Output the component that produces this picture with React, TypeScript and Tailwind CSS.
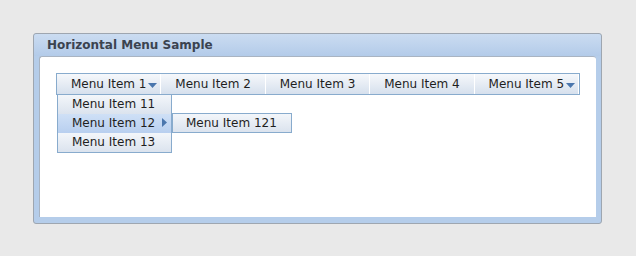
import { ReactNode } from 'react';

const font = { fontFamily: '"DejaVu Sans", Verdana, sans-serif' };

function DownArrow() {
  return (
    <svg width="9" height="5" viewBox="0 0 9 5" className="absolute top-[5px] -right-[11px]">
      <path d="M0 0h9L4.5 5z" fill="#4a76ad" />
    </svg>
  );
}

function BarItem({ children, arrow }: { children: ReactNode; arrow?: boolean }) {
  return (
    <div className="flex-1 flex items-center justify-center border-r border-white last:border-r-0 h-full">
      <span className="relative leading-none">
        {children}
        {arrow && <DownArrow />}
      </span>
    </div>
  );
}

function DropItem({ children, active, sub }: { children: ReactNode; active?: boolean; sub?: boolean }) {
  return (
    <div
      className={`relative h-[19px] flex items-center pl-[14px] pb-[2px] ${
        active
          ? 'bg-gradient-to-b from-[#cfe0f6] to-[#b8cfef]'
          : 'bg-gradient-to-b from-[#f3f6fa] to-[#dbe3ee]'
      }`}
    >
      {children}
      {sub && (
        <svg width="5" height="9" viewBox="0 0 5 9" className="absolute right-[4px] top-[4px]">
          <path d="M0 0l5 4.5L0 9z" fill="#4a76ad" />
        </svg>
      )}
    </div>
  );
}

export default function App() {
  return (
    <div className="w-[636px] h-[256px] bg-[#e9e9e9] pt-[33px] pl-[33px] text-[12px] text-[#1e1e1e]" style={font}>
      <div className="w-[569px] h-[191px] rounded-[3px] border border-[#9ea6b0] bg-[#b5cdea] flex flex-col">
        <div className="h-[22px] pl-[13px] flex items-center font-bold text-[#3b4350] bg-gradient-to-b from-[#cbdcf1] to-[#b3cbe9] rounded-t-[3px]">
          Horizontal Menu Sample
        </div>
        <div className="flex-1 mx-[5px] mb-[6px] bg-white border-l border-t border-[#a9b4c2] rounded-t-[3px] pt-[16px] pl-[16px]">
          <div className="relative w-[524px] h-[22px] border border-[#88abcd] flex bg-gradient-to-b from-[#f6f8fb] to-[#d6e0ed]">
            <BarItem arrow>Menu Item 1</BarItem>
            <BarItem>Menu Item 2</BarItem>
            <BarItem>Menu Item 3</BarItem>
            <BarItem>Menu Item 4</BarItem>
            <BarItem arrow>Menu Item 5</BarItem>

            <div className="absolute left-0 top-[20px] w-[115px] border border-[#88abcd] bg-white">
              <DropItem>Menu Item 11</DropItem>
              <DropItem active sub>Menu Item 12</DropItem>
              <DropItem>Menu Item 13</DropItem>
            </div>
            <div className="absolute left-[115px] top-[39px] w-[120px] h-[20px] border border-[#88abcd] flex items-center pl-[13px] bg-gradient-to-b from-[#f3f6fa] to-[#dbe3ee]">
              Menu Item 121
            </div>
          </div>
        </div>
      </div>
    </div>
  );
}
